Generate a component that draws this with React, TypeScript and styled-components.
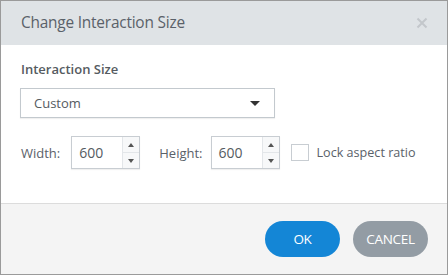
import styled, { createGlobalStyle } from 'styled-components';

const GlobalStyle = createGlobalStyle`
  *, *::before, *::after {
    box-sizing: border-box;
  }
  html, body {
    margin: 0;
    padding: 0;
    background: #ffffff;
  }
  body {
    font-family: 'Open Sans', 'Noto Sans', sans-serif;
  }
`;

const Dialog = styled.div`
  width: 448px;
  height: 275px;
  border: 1px solid #9a9a9a;
  display: flex;
  flex-direction: column;
  background: #ffffff;
`;

const Header = styled.div`
  height: 44px;
  flex-shrink: 0;
  background: #dfe3e6;
  display: flex;
  align-items: center;
  justify-content: space-between;
  padding: 0 19px 1px 20px;
`;

const Title = styled.h1`
  margin: 0;
  font-size: 15.4px;
  font-weight: 400;
  color: #5a6169;
  letter-spacing: -0.2px;
`;

const Close = styled.button`
  border: none;
  background: none;
  padding: 0;
  width: 12px;
  height: 12px;
  display: flex;
  cursor: pointer;
`;

const Body = styled.div`
  flex: 1;
  padding: 15px 19px 0 19px;
  display: flex;
  flex-direction: column;
`;

const SectionLabel = styled.div`
  font-size: 13px;
  font-weight: 600;
  color: #555b61;
  margin-left: 1px;
  line-height: 18px;
`;

const Select = styled.div`
  margin-top: 10px;
  width: 255px;
  height: 30px;
  border: 1px solid #c3c9ce;
  box-shadow: 0 1px 1px rgba(0, 0, 0, 0.06);
  display: flex;
  align-items: center;
  justify-content: space-between;
  padding: 0 14px 0 13px;
  font-size: 13px;
  color: #555b61;
`;

const Caret = styled.span`
  width: 0;
  height: 0;
  border-left: 5px solid transparent;
  border-right: 5px solid transparent;
  border-top: 5px solid #333;
`;

const SizeRow = styled.div`
  margin-top: 18px;
  display: flex;
  align-items: center;
  padding-left: 1px;
`;

const FieldLabel = styled.span<{ gap: number }>`
  font-size: 13px;
  color: #5a6169;
  margin-right: ${({ gap }) => gap}px;
`;

const Spinner = styled.div`
  width: 69px;
  height: 33px;
  border: 1px solid #c8cdd2;
  box-shadow: 0 1px 1px rgba(0, 0, 0, 0.06);
  display: flex;
  margin-right: 19px;
`;

const SpinValue = styled.div`
  flex: 1;
  display: flex;
  align-items: center;
  padding-left: 7px;
  font-size: 14px;
  color: #555b61;
`;

const SpinButtons = styled.div`
  width: 17px;
  border-left: 1px solid #e3e6e9;
  display: flex;
  flex-direction: column;
`;

const SpinButton = styled.div<{ up?: boolean }>`
  flex: 1;
  display: flex;
  align-items: center;
  justify-content: center;
  border-top: ${({ up }) => (up ? 'none' : '1px solid #e3e6e9')};
  background: #f7f8f9;

  &::after {
    content: '';
    width: 0;
    height: 0;
    border-left: 3px solid transparent;
    border-right: 3px solid transparent;
    ${({ up }) =>
      up ? 'border-bottom: 4px solid #555;' : 'border-top: 4px solid #555;'}
  }
`;

const CheckLabel = styled.label`
  display: flex;
  align-items: center;
  font-size: 12.6px;
  color: #5a6169;
  margin-left: -8px;
`;

const CheckBox = styled.span`
  width: 18px;
  height: 17px;
  border: 1px solid #c8cdd2;
  background: #fff;
  margin-right: 8px;
`;

const Footer = styled.div`
  height: 71px;
  flex-shrink: 0;
  border-top: 1px solid #dcdcdc;
  background: #f4f4f4;
  display: flex;
  justify-content: flex-end;
  align-items: flex-start;
  padding: 17px 19px 0 0;
  gap: 13px;
`;

const Button = styled.button<{ primary?: boolean }>`
  width: 75px;
  height: 36px;
  border: none;
  border-radius: 18px;
  background: ${({ primary }) => (primary ? '#1486d6' : '#939ca4')};
  color: #ffffff;
  font-family: 'Open Sans', 'Noto Sans', sans-serif;
  font-size: 13.5px;
  letter-spacing: -0.3px;
  cursor: pointer;
`;

const SizeField = ({ label, value, gap }: { label: string; value: number; gap: number }) => (
  <>
    <FieldLabel gap={gap}>{label}</FieldLabel>
    <Spinner>
      <SpinValue>{value}</SpinValue>
      <SpinButtons>
        <SpinButton up />
        <SpinButton />
      </SpinButtons>
    </Spinner>
  </>
);

export default function App() {
  return (
    <>
      <GlobalStyle />
      <Dialog>
        <Header>
          <Title>Change Interaction Size</Title>
          <Close aria-label="Close">
            <svg width="12" height="12" viewBox="0 0 12 12">
              <path d="M1.5 1.5 L10.5 10.5 M10.5 1.5 L1.5 10.5" stroke="#c3c7cb" strokeWidth="2" />
            </svg>
          </Close>
        </Header>
        <Body>
          <SectionLabel>Interaction Size</SectionLabel>
          <Select>
            Custom
            <Caret />
          </Select>
          <SizeRow>
            <SizeField label="Width:" value={600} gap={11} />
            <SizeField label="Height:" value={600} gap={8} />
            <CheckLabel>
              <CheckBox />
              Lock aspect ratio
            </CheckLabel>
          </SizeRow>
        </Body>
        <Footer>
          <Button primary>OK</Button>
          <Button>CANCEL</Button>
        </Footer>
      </Dialog>
    </>
  );
}
